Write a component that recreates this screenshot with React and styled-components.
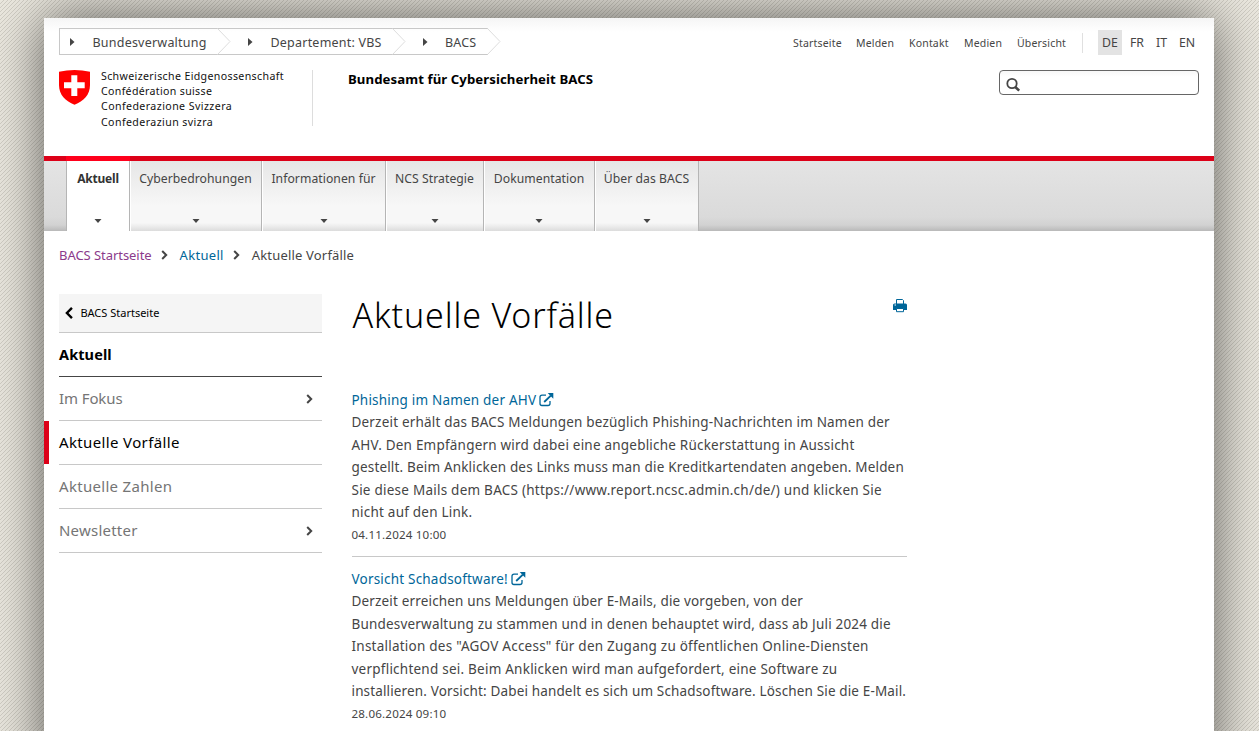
import React from "react";
import styled, { createGlobalStyle, css } from "styled-components";

const GlobalStyle = createGlobalStyle`
  * { box-sizing: border-box; }
  html, body { margin: 0; padding: 0; }
  body {
    font-family: "Noto Sans", "Open Sans", sans-serif;
    font-size: 13.5px;
    color: #454545;
  }
  a { color: inherit; text-decoration: none; }
  ul, ol { list-style: none; margin: 0; padding: 0; }
  h1, h2, p { margin: 0; font-weight: inherit; }
`;

const spacing = css`
  letter-spacing: ${(p) => p.$track || 0}px;
  white-space: nowrap;
`;

const Backdrop = styled.div`
  height: 731px;
  padding: 18px 0 0 44px;
  overflow: hidden;
  background: linear-gradient(135deg, #ebe8df 43.5%, #d0cdc4 44%, #d0cdc4 56%, #ebe8df 56.5%) 0 0 / 4px 4px;
`;

const Page = styled.div`
  width: 1170px;
  height: 760px;
  background: linear-gradient(#f5f5f5, #fff 14px) #fff;
  box-shadow: 0 0 50px rgba(0, 0, 0, 0.62);
`;

const Header = styled.header`
  height: 138px;
  padding: 10px 15px 0;
`;

const HeaderRow = styled.div`
  display: flex;
  justify-content: space-between;
  align-items: flex-start;
  height: ${(p) => p.$height}px;
`;

const Path = styled.ol`
  display: flex;
  height: 27px;
  border: 1px solid #c8c8c8;
  border-right: 0;
`;

const PathItem = styled.li`
  position: relative;
  display: flex;
  align-items: center;
  width: ${(p) => p.$width}px;
  padding: 2px 0 0 ${(p) => p.$pad}px;
  font-size: 12.5px;
  ${spacing}
  svg { position: absolute; }
`;

const Tip = styled.svg`
  right: -13px;
  top: -1px;
`;

const Play = styled.svg`
  left: ${(p) => p.$left}px;
  top: 9px;
`;

const Services = styled.nav`
  display: flex;
  align-items: center;
  height: 25px;
  margin: 2px -4px 0 0;
`;

const ServiceLink = styled.a`
  width: ${(p) => p.$width}px;
  font-size: 10.5px;
  ${spacing}
`;

const Languages = styled.div`
  display: flex;
  align-items: center;
  height: 20px;
  padding-left: 15px;
  border-left: 1px solid #e0e0e0;
`;

const Language = styled.a`
  display: flex;
  align-items: center;
  justify-content: center;
  width: ${(p) => p.$width}px;
  height: 25px;
  font-size: 12.3px;
  background: ${(p) => (p.$active ? "#e3e3e3" : "transparent")};
  ${spacing}
`;

const Brand = styled.div`
  display: flex;
  align-items: flex-start;
`;

const LogoText = styled.div`
  width: 212px;
  height: 56px;
  margin-left: 11px;
  border-right: 1px solid #ddd;
  color: #111;
  font-size: 10.6px;
`;

const LogoLine = styled.span`
  display: block;
  height: 15.2px;
  line-height: 13px;
  ${spacing}
`;

const Office = styled.h2`
  margin-left: 35px;
  color: #000;
  font-size: 13.2px;
  line-height: 18px;
  font-weight: 700;
  ${spacing}
`;

const Search = styled.div`
  width: 200px;
  height: 25px;
  padding: 6px 5px;
  border: 1px solid #666;
  border-radius: 4px;
  background: linear-gradient(#f7f7f7, #fff 6px);
`;

const MainNav = styled.nav`
  display: flex;
  height: 75px;
  padding-left: 22px;
  border-top: 5px solid #dc0018;
  background: linear-gradient(#e4e4e4, #dadada 56px, #d2d2d2 64px, #b9b9b9);
`;

const NavItem = styled.a`
  display: flex;
  flex-direction: column;
  align-items: center;
  justify-content: space-between;
  width: ${(p) => p.$width}px;
  padding: 8px 0 8px;
  border-right: 1px solid #b5b5b5;
  box-shadow: inset 1px 0 #fff;
  font-size: 12.2px;
  line-height: 19px;
  background: linear-gradient(#e6e6e6, #f7f7f7 45px, #f7f7f7 62px, #dcdcdc);
  ${spacing}
  ${(p) =>
    p.$active &&
    css`
      margin-top: -5px;
      border-left: 1px solid #b5b5b5;
      border-image: linear-gradient(#ff001c 5px, #b5b5b5 5px) 5 1 0 1;
      border-top: 5px solid #ff001c;
      background: #fff;
      color: #333;
      font-weight: 700;
      font-size: 12px;
      letter-spacing: -0.2px;
    `}
`;

const Breadcrumb = styled.div`
  display: flex;
  align-items: center;
  height: 48px;
  padding-left: 15px;
  font-size: 13px;
  svg { margin: 0 11.5px 0 9.5px; }
`;

const Crumb = styled.a`
  color: ${(p) => p.$color};
  ${spacing}
`;

const Columns = styled.div`
  display: flex;
  padding-top: 15px;
`;

const Sidebar = styled.aside`
  width: 278px;
`;

const BackLink = styled.a`
  display: flex;
  align-items: center;
  gap: 7px;
  height: 39px;
  margin-left: 15px;
  padding: 0 0 1px 6px;
  border-bottom: 1px solid #c8c8c8;
  background: #f5f5f5;
  color: #000;
  font-size: 11px;
  ${spacing}
`;

const SideItem = styled.a`
  display: flex;
  height: 44px;
  padding-left: 15px;
  background: ${(p) => (p.$active ? "linear-gradient(#dc0018, #dc0018) 0 0 / 5px 43px no-repeat" : "none")};
`;

const SideLabel = styled.span`
  display: flex;
  flex: 1;
  align-items: center;
  justify-content: space-between;
  padding: 0 9px 2px 0;
  border-bottom: 1px solid ${(p) => (p.$head ? "#454545" : "#c8c8c8")};
  color: ${(p) => (p.$head || p.$active ? "#000" : "#757575")};
  font-size: ${(p) => (p.$head ? 14.5 : 15)}px;
  font-weight: ${(p) => (p.$head ? 700 : 400)};
  ${spacing}
  svg { margin-top: 2px; }
`;

const Content = styled.main`
  width: 555.5px;
  margin-left: 29.5px;
`;

const TitleRow = styled.div`
  display: flex;
  align-items: flex-start;
  justify-content: space-between;
  height: 95px;
`;

const Title = styled.h1`
  padding-left: 1px;
  color: #000;
  font-size: 34px;
  font-weight: 300;
  line-height: 42px;
  ${spacing}
`;

const PrintButton = styled.a`
  display: block;
  margin-top: 5px;
  line-height: 0;
`;

const Article = styled.article`
  height: 168px;
  border-bottom: 1px solid #c8c8c8;
  line-height: 22.4px;
  & + & {
    height: auto;
    margin-top: 11px;
    border-bottom: 0;
  }
`;

const ArticleLink = styled.a`
  display: flex;
  align-items: center;
  gap: 3px;
  height: 22.4px;
  color: #006699;
  ${spacing}
`;

const Line = styled.span`
  display: block;
  ${spacing}
`;

const Time = styled.time`
  display: block;
  padding-top: 1px;
  font-size: 11.6px;
  ${spacing}
`;

const Chevron = ({ color = "#454545", size = 10, flip }) => (
  <svg width={size * 0.7} height={size} viewBox="0 0 7 10" fill="none">
    <path d={flip ? "M5.8 0.8 1.6 5 5.8 9.2" : "M1.2 1 5.2 5 1.2 9"} stroke={color} strokeWidth="2" />
  </svg>
);

const ExternalIcon = () => (
  <svg width="15" height="14" viewBox="0 0 15 14" fill="none" stroke="#006699">
    <path d="M7 2.2H3Q1 2.2 1 4.2V10.5Q1 12.5 3 12.5H9Q11 12.5 11 10.5V8" strokeWidth="1.3" />
    <path d="M5.2 9 11.8 2.6" strokeWidth="1.8" />
    <path d="M8.7 0H14.3V5.8Z" fill="#006699" stroke="none" />
  </svg>
);

const Shield = () => (
  <svg width="31" height="35" viewBox="0 0 31 35">
    <path d="M0 1.8Q15.5-1.8 31 1.8V15C31 25 24.5 31.2 15.5 34.8C6.5 31.2 0 25 0 15Z" fill="#f00" />
    <path d="M12.3 5.3H18.3V12.3H25.7V18.3H18.3V26H12.3V18.3H5V12.3H12.3Z" fill="#fff" />
  </svg>
);

const PrintIcon = () => (
  <svg width="14" height="14" viewBox="0 0 14 14">
    <path d="M3.5 5V.5H9.5L10.5 1.5V5" fill="#fff" stroke="#006699" />
    <path d="M1.5 4.5H12.5Q14 4.5 14 6V11H0V6Q0 4.5 1.5 4.5Z" fill="#006699" />
    <path d="M3.5 9.5H10.5V12.7H3.5Z" fill="#fff" stroke="#006699" />
    <path d="M1.5 6H3" stroke="#fff" />
  </svg>
);

const path = [
  { label: "Bundesverwaltung", width: 158, pad: 32.5, left: 10, track: 0.22 },
  { label: "Departement: VBS", width: 175, pad: 52.5, left: 30, track: 0.22 },
  { label: "BACS", width: 95, pad: 52, left: 30, track: 0.2 },
];

const services = [
  ["Startseite", 63],
  ["Melden", 53],
  ["Kontakt", 55],
  ["Medien", 53],
  ["Übersicht", 65],
];

const languages = [
  ["DE", 24],
  ["FR", 30],
  ["IT", 19],
  ["EN", 32],
];

const logo = [
  ["Schweizerische Eidgenossenschaft", 0.36],
  ["Confédération suisse", 0.33],
  ["Confederazione Svizzera", 0.43],
  ["Confederaziun svizra", 0.42],
];

const nav = [
  ["Aktuell", 64],
  ["Cyberbedrohungen", 132],
  ["Informationen für", 124],
  ["NCS Strategie", 98],
  ["Dokumentation", 111],
  ["Über das BACS", 104],
];

const sideItems = [
  { label: "Aktuell", head: true, track: 0.1 },
  { label: "Im Fokus", more: true, track: -0.1 },
  { label: "Aktuelle Vorfälle", active: true, track: 0.36 },
  { label: "Aktuelle Zahlen", track: 0.3 },
  { label: "Newsletter", more: true, track: 0.22 },
];

const articles = [
  {
    title: "Phishing im Namen der AHV",
    time: "04.11.2024 10:00",
    lines: [
      ["Derzeit erhält das BACS Meldungen bezüglich Phishing-Nachrichten im Namen der", 0.19],
      ["AHV. Den Empfängern wird dabei eine angebliche Rückerstattung in Aussicht", 0.21],
      ["gestellt. Beim Anklicken des Links muss man die Kreditkartendaten angeben. Melden", 0.17],
      ["Sie diese Mails dem BACS (https://www.report.ncsc.admin.ch/de/) und klicken Sie", 0.24],
      ["nicht auf den Link.", 0.22],
    ],
  },
  {
    title: "Vorsicht Schadsoftware!",
    time: "28.06.2024 09:10",
    lines: [
      ["Derzeit erreichen uns Meldungen über E-Mails, die vorgeben, von der", 0.17],
      ["Bundesverwaltung zu stammen und in denen behauptet wird, dass ab Juli 2024 die", 0.19],
      ["Installation des \"AGOV Access\" für den Zugang zu öffentlichen Online-Diensten", 0.235],
      ["verpflichtend sei. Beim Anklicken wird man aufgefordert, eine Software zu", 0.235],
      ["installieren. Vorsicht: Dabei handelt es sich um Schadsoftware. Löschen Sie die E-Mail.", 0.145],
    ],
  },
];

export default function App() {
  return (
    <Backdrop>
      <GlobalStyle />
      <Page>
        <Header>
          <HeaderRow $height={42}>
            <Path>
              {path.map((p) => (
                <PathItem key={p.label} $width={p.width} $pad={p.pad} $track={p.track}>
                  <Play $left={p.left} width="5" height="8" viewBox="0 0 5 8">
                    <path d="M0 0 4.5 4 0 8Z" fill="#454545" />
                  </Play>
                  {p.label}
                  <Tip width="14" height="27" viewBox="0 0 14 27" fill="none">
                    <path d="M.5.5 13 13.5.5 26.5" stroke="#ddd" />
                  </Tip>
                </PathItem>
              ))}
            </Path>
            <Services>
              {services.map(([label, width]) => (
                <ServiceLink key={label} $width={width} $track={0.18}>{label}</ServiceLink>
              ))}
              <Languages>
                {languages.map(([label, width]) => (
                  <Language key={label} $width={width} $active={label === "DE"}>{label}</Language>
                ))}
              </Languages>
            </Services>
          </HeaderRow>
          <HeaderRow $height={60}>
            <Brand>
              <Shield />
              <LogoText>
                {logo.map(([label, track]) => (
                  <LogoLine key={label} $track={track}>{label}</LogoLine>
                ))}
              </LogoText>
              <Office $track={0.08}>Bundesamt für Cybersicherheit BACS</Office>
            </Brand>
            <Search>
              <svg width="16" height="16" viewBox="0 0 16 16" fill="none" stroke="#454545">
                <circle cx="7" cy="6.5" r="4.7" strokeWidth="1.8" />
                <path d="M10.3 10 14.2 13.6" strokeWidth="2.6" />
              </svg>
            </Search>
          </HeaderRow>
        </Header>

        <MainNav>
          {nav.map(([label, width], i) => (
            <NavItem key={label} $width={width} $active={i === 0} $track={0.05}>
              {label}
              <svg width="8" height="4" viewBox="0 0 8 4">
                <path d="M.5 0H7.5L4 4Z" fill="#454545" />
              </svg>
            </NavItem>
          ))}
        </MainNav>

        <Breadcrumb>
          <Crumb $color="#8b3a8b" $track={-0.05}>BACS Startseite</Crumb>
          <Chevron />
          <Crumb $color="#006699" $track={0.3}>Aktuell</Crumb>
          <Chevron />
          <Crumb $color="#454545" $track={0.18}>Aktuelle Vorfälle</Crumb>
        </Breadcrumb>

        <Columns>
          <Sidebar>
            <BackLink>
              <Chevron color="#000" size={12} flip />
              BACS Startseite
            </BackLink>
            {sideItems.map((s) => (
              <SideItem key={s.label} $active={s.active}>
                <SideLabel $head={s.head} $active={s.active} $track={s.track}>
                  {s.label}
                  {s.more && <Chevron />}
                </SideLabel>
              </SideItem>
            ))}
          </Sidebar>
          <Content>
            <TitleRow>
              <Title $track={0.82}>Aktuelle Vorfälle</Title>
              <PrintButton><PrintIcon /></PrintButton>
            </TitleRow>
            {articles.map((a) => (
              <Article key={a.title}>
                <ArticleLink $track={0.2}>
                  {a.title}
                  <ExternalIcon />
                </ArticleLink>
                {a.lines.map(([text, track]) => (
                  <Line key={text} $track={track}>{text}</Line>
                ))}
                <Time $track={0.18}>{a.time}</Time>
              </Article>
            ))}
          </Content>
        </Columns>
      </Page>
    </Backdrop>
  );
}
